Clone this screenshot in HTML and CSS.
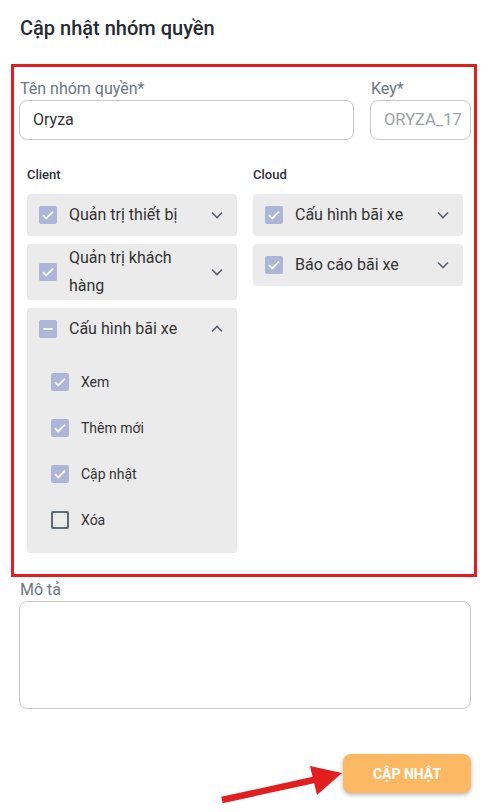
FILE: index.html
```html
<!DOCTYPE html>
<html lang="vi">
<head>
<meta charset="utf-8">
<title>Cập nhật nhóm quyền</title>
<link rel="stylesheet" href="styles.css">
</head>
<body>
<div class="dialog">
  <h1 class="title">Cập nhật nhóm quyền</h1>
  <div class="highlight">
    <div class="fields">
      <div class="field name">
        <label class="label">Tên nhóm quyền*</label>
        <div class="input">Oryza</div>
      </div>
      <div class="field key">
        <label class="label">Key*</label>
        <div class="input disabled">ORYZA_17</div>
      </div>
    </div>
    <div class="groups">
      <div class="group">
        <div class="group-title">Client</div>
        <div class="card">
          <div class="card-head">
            <span class="cb checked"><svg viewBox="0 0 18 18"><path d="M4 9.2l3.2 3.2L14 5.6"/></svg></span>
            <span class="card-text">Quản trị thiết bị</span>
            <svg class="chev" viewBox="0 0 12 8"><path d="M1 1.5l5 5 5-5"/></svg>
          </div>
        </div>
        <div class="card">
          <div class="card-head">
            <span class="cb checked"><svg viewBox="0 0 18 18"><path d="M4 9.2l3.2 3.2L14 5.6"/></svg></span>
            <span class="card-text">Quản trị khách hàng</span>
            <svg class="chev" viewBox="0 0 12 8"><path d="M1 1.5l5 5 5-5"/></svg>
          </div>
        </div>
        <div class="card">
          <div class="card-head">
            <span class="cb checked"><svg viewBox="0 0 18 18"><path d="M4.5 9h9"/></svg></span>
            <span class="card-text">Cấu hình bãi xe</span>
            <svg class="chev" viewBox="0 0 12 8"><path d="M1 6.5l5-5 5 5"/></svg>
          </div>
          <div class="sublist">
            <div class="subrow"><span class="cb checked"><svg viewBox="0 0 18 18"><path d="M4 9.2l3.2 3.2L14 5.6"/></svg></span><span class="sub-text">Xem</span></div>
            <div class="subrow"><span class="cb checked"><svg viewBox="0 0 18 18"><path d="M4 9.2l3.2 3.2L14 5.6"/></svg></span><span class="sub-text">Thêm mới</span></div>
            <div class="subrow"><span class="cb checked"><svg viewBox="0 0 18 18"><path d="M4 9.2l3.2 3.2L14 5.6"/></svg></span><span class="sub-text">Cập nhật</span></div>
            <div class="subrow"><span class="cb empty"></span><span class="sub-text">Xóa</span></div>
          </div>
        </div>
      </div>
      <div class="group">
        <div class="group-title">Cloud</div>
        <div class="card">
          <div class="card-head">
            <span class="cb checked"><svg viewBox="0 0 18 18"><path d="M4 9.2l3.2 3.2L14 5.6"/></svg></span>
            <span class="card-text">Cấu hình bãi xe</span>
            <svg class="chev" viewBox="0 0 12 8"><path d="M1 1.5l5 5 5-5"/></svg>
          </div>
        </div>
        <div class="card">
          <div class="card-head">
            <span class="cb checked"><svg viewBox="0 0 18 18"><path d="M4 9.2l3.2 3.2L14 5.6"/></svg></span>
            <span class="card-text">Báo cáo bãi xe</span>
            <svg class="chev" viewBox="0 0 12 8"><path d="M1 1.5l5 5 5-5"/></svg>
          </div>
        </div>
      </div>
    </div>
  </div>
  <div class="field desc">
    <label class="label">Mô tả</label>
    <div class="textarea"></div>
  </div>
  <div class="actions">
    <button class="btn">CẬP NHẬT</button>
  </div>
</div>
<svg class="arrow" viewBox="0 0 493 812" width="493" height="812">
  <line x1="222" y1="800" x2="318" y2="779" stroke="#e31e1e" stroke-width="6.5"/>
  <polygon points="310,766 342,773 317,795" fill="#e31e1e"/>
</svg>
</body>
</html>
```
FILE: styles.css
```css
* { box-sizing: border-box; }
html, body { margin: 0; padding: 0; background: #fff; }
body {
  font-family: Roboto, "Noto Sans", "Liberation Sans", sans-serif;
  color: #333;
  width: 493px;
  height: 812px;
  overflow: hidden;
  position: relative;
}
.dialog { padding: 14px 22px 0 19px; }
.title {
  margin: 0 0 0 1px;
  font-size: 20px;
  line-height: 28px;
  font-weight: 500;
  color: #262b32;
}
.highlight {
  margin: 22px -6px 0 -8px;
  border: 3px solid #e31e1e;
  padding: 12px 3px 21px 5px;
}
.fields { display: flex; gap: 16px; }
.field { display: flex; flex-direction: column; }
.field.name { flex: 1; }
.field.key { width: 101px; }
.label {
  font-size: 16px;
  line-height: 20px;
  color: #6b7683;
  margin: 0 0 1px 1px;
}
.input {
  height: 40px;
  border: 1px solid #c8c8c8;
  border-radius: 8px;
  padding: 0 13px;
  font-size: 16px;
  line-height: 38px;
  color: #333;
  white-space: nowrap;
  overflow: hidden;
}
.input.disabled { color: #9aa1a9; font-size: 16.5px; }
.groups {
  display: grid;
  grid-template-columns: 1fr 1fr;
  gap: 16px;
  padding: 27px 8px 0;
}
.group { display: flex; flex-direction: column; gap: 8px; }
.group-title {
  font-size: 13px;
  line-height: 16px;
  font-weight: 500;
  color: #2d3138;
  margin-bottom: 3px;
}
.card {
  background: #ebebeb;
  border-radius: 4px;
}
.card-head {
  display: flex;
  align-items: center;
  min-height: 42px;
  padding: 0 14px 0 12px;
}
.card-text {
  flex: 1;
  font-size: 16px;
  line-height: 28px;
  color: #333;
  margin-left: 12px;
  margin-right: 12px;
}
.cb {
  width: 18px;
  height: 18px;
  border-radius: 2px;
  flex: none;
  display: flex;
}
.cb.checked { background: #adb5d8; }
.cb svg { width: 18px; height: 18px; fill: none; stroke: #fff; stroke-width: 1.8; }
.cb.empty { border: 2px solid #5c6a79; }
.chev { width: 12px; height: 8px; flex: none; fill: none; stroke: #5a6371; stroke-width: 1.6; }
.sublist { padding: 9px 0 10px 24px; }
.subrow { display: flex; align-items: center; height: 46px; }
.sub-text { margin-left: 12px; font-size: 14px; color: #333; }
.field.desc { margin-top: 3px; }
.textarea {
  height: 108px;
  border: 1px solid #c8c8c8;
  border-radius: 8px;
}
.actions { display: flex; justify-content: flex-end; margin-top: 45px; }
.btn {
  width: 128px;
  height: 39px;
  border: none;
  border-radius: 8px;
  background: #fdb863;
  color: #fff;
  font-family: Roboto, "Noto Sans", sans-serif;
  font-weight: 700;
  font-size: 14px;
  box-shadow: 0 2px 4px rgba(0,0,0,0.28);
}
.arrow { position: absolute; left: 0; top: 0; pointer-events: none; }
```
